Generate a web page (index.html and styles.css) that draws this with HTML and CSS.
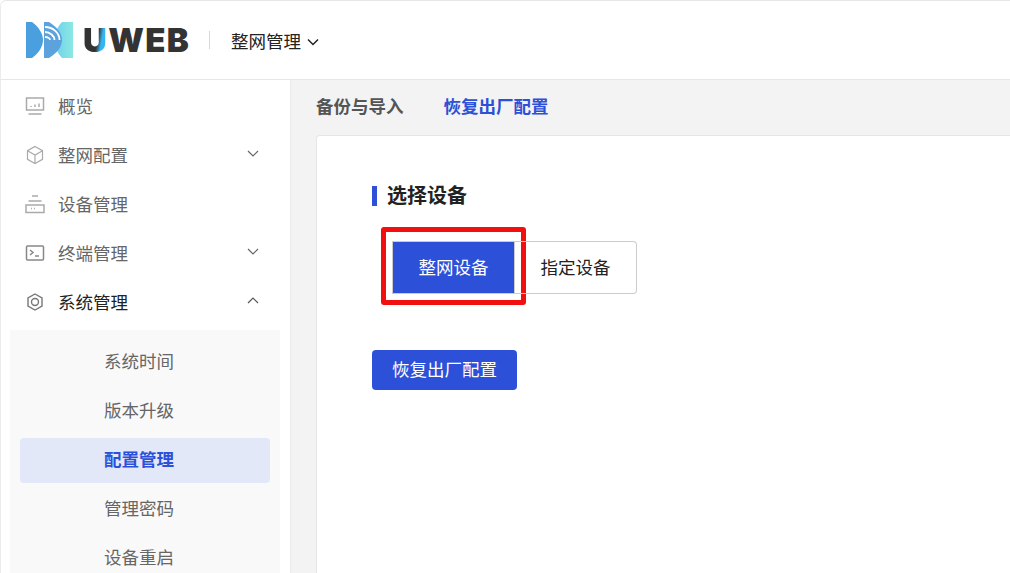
FILE: index.html
```html
<!DOCTYPE html>
<html lang="zh-CN">
<head>
    <meta charset="UTF-8">
    <title>UWEB</title>
    <link rel="stylesheet" href="styles.css">
</head>
<body>
    <header class="topbar">
        <div class="logo">
            <svg class="logo-mark" width="47" height="36" viewBox="0 0 47 36">
                <defs>
                    <linearGradient id="markRight" x1="0" y1="0" x2="1" y2="0">
                        <stop offset="0" stop-color="#6fd0ea"/>
                        <stop offset="1" stop-color="#8ce8e4"/>
                    </linearGradient>
                </defs>
                <path d="M47 0H36C31 5 29 12 29 18C29 24 31 31 36 36H47Z" fill="url(#markRight)"/>
                <path d="M0 0H6C13 5 17 12 17 18C17 24 13 31 6 36H0Z" fill="#4a9fdf"/>
                <path d="M18 0H23C31 5 36 11 36 18C36 25 31 31 23 36H18Z" fill="#5ca3de"/>
                <g fill="none" stroke="#fff" stroke-width="1.800">
                    <path d="M19 5C27 5 33.500 11 33.500 18"/>
                    <path d="M19 10C24 10 28.500 14 28.500 18"/>
                    <path d="M19 15C22 15 24 16.500 24 18"/>
                </g>
            </svg>
            <span class="logo-text"><span class="logo-u">U</span>WEB</span>
        </div>
        <div class="scope">
            <span class="scope-name">整网管理</span>
            <svg class="scope-arrow" width="12" height="8" viewBox="0 0 12 8"><path d="M1 1.500L6 6.500L11 1.500" fill="none" stroke="#222" stroke-width="1.500"/></svg>
        </div>
    </header>

    <div class="main">
        <aside class="sidebar">
            <div class="menu-item">
                <svg class="menu-icon" width="20" height="20" viewBox="0 0 20 20"><g fill="none" stroke="#aaa" stroke-width="1.500"><rect x="1.500" y="2" width="17" height="12"/><path d="M3.500 18H16.500"/><path d="M6 11V10M10 11V8.500M14 11V7.500"/></g></svg>
                <span>概览</span>
            </div>
            <div class="menu-item">
                <svg class="menu-icon" width="20" height="20" viewBox="0 0 20 20"><g fill="none" stroke="#aaa" stroke-width="1.200"><path d="M10 1.500L17.500 5.700V14.300L10 18.500L2.500 14.300V5.700Z"/><path d="M2.500 5.700L10 10L17.500 5.700M10 10V18.500"/></g></svg>
                <span>整网配置</span>
                <svg class="menu-arrow" width="12" height="7" viewBox="0 0 12 7"><path d="M1 1L6 6L11 1" fill="none" stroke="#666" stroke-width="1.200"/></svg>
            </div>
            <div class="menu-item">
                <svg class="menu-icon" width="20" height="20" viewBox="0 0 20 20"><g fill="none" stroke="#aaa" stroke-width="1.500"><path d="M7 2H13M3.500 7H16.500"/><rect x="1" y="11" width="18" height="7.500"/><path d="M6 14.500H7M9 14.500H10"/></g></svg>
                <span>设备管理</span>
            </div>
            <div class="menu-item">
                <svg class="menu-icon" width="20" height="20" viewBox="0 0 20 20"><g fill="none" stroke="#888" stroke-width="1.500"><rect x="1.500" y="3" width="17" height="14" rx="1"/><path d="M5 7L8 9.500L5 12"/><path d="M10 13H14"/></g></svg>
                <span>终端管理</span>
                <svg class="menu-arrow" width="12" height="7" viewBox="0 0 12 7"><path d="M1 1L6 6L11 1" fill="none" stroke="#666" stroke-width="1.200"/></svg>
            </div>
            <div class="menu-item is-open">
                <svg class="menu-icon" width="20" height="20" viewBox="0 0 20 20"><g fill="none" stroke="#777" stroke-width="1.400"><path d="M10 2L17 6V14L10 18L3 14V6Z"/><circle cx="10" cy="10" r="3.500"/></g></svg>
                <span>系统管理</span>
                <svg class="menu-arrow" width="12" height="7" viewBox="0 0 12 7"><path d="M1 6L6 1L11 6" fill="none" stroke="#555" stroke-width="1.200"/></svg>
            </div>
            <div class="submenu">
                <div class="submenu-item">系统时间</div>
                <div class="submenu-item">版本升级</div>
                <div class="submenu-item active">配置管理</div>
                <div class="submenu-item">管理密码</div>
                <div class="submenu-item">设备重启</div>
            </div>
        </aside>

        <section class="content">
            <nav class="tabs">
                <a class="tab">备份与导入</a>
                <a class="tab active">恢复出厂配置</a>
            </nav>
            <div class="card">
                <h2 class="card-title">选择设备</h2>
                <div class="switch">
                    <div class="switch-btn selected">整网设备<span class="mark-box"></span></div>
                    <div class="switch-btn">指定设备</div>
                </div>
                <button class="primary-btn" type="button">恢复出厂配置</button>
            </div>
        </section>
    </div>
</body>
</html>
```

FILE: styles.css
```css
body {
    margin: 0;
    width: 1010px;
    height: 573px;
    overflow: hidden;
    font-family: "Liberation Sans", "Noto Sans CJK SC", sans-serif;
    font-size: 17.500px;
    color: #222;
    background-color: #fff;
    display: flex;
    flex-direction: column;
}
.topbar {
    height: 80px;
    box-sizing: border-box;
    flex-shrink: 0;
    display: flex;
    align-items: center;
    padding-left: 25px;
    border-top: 1px solid #e6e6e6;
    border-left: 1px solid #ececec;
    border-bottom: 1px solid #e6e6e6;
    border-top-left-radius: 6px;
}
.logo {
    display: flex;
    align-items: center;
    gap: 10px;
    padding-right: 19px;
}
.logo-text {
    font-family: Inter, "Liberation Sans", sans-serif;
    font-weight: 900;
    font-size: 33px;
    line-height: 36px;
    letter-spacing: 1.300px;
    color: #333;
}
.logo-u {
    background: linear-gradient(100deg, #333 55%, #35b4f0 70%);
    -webkit-background-clip: text;
    background-clip: text;
    color: transparent;
}
.scope {
    display: flex;
    align-items: center;
    gap: 6px;
    height: 18px;
    padding-left: 21px;
    border-left: 1px solid #d8d8d8;
    line-height: 18px;
}
.scope-name {
    padding-top: 3px;
}
.scope-arrow {
    margin-top: 3px;
}
.main {
    flex: 1;
    display: flex;
    min-height: 0;
}
.sidebar {
    width: 291px;
    flex-shrink: 0;
    box-sizing: border-box;
    padding-top: 1px;
    border-right: 1px solid #ececec;
    border-left: 1px solid #ececec;
    overflow: hidden;
}
.menu-item {
    height: 49px;
    display: flex;
    align-items: center;
    padding-left: 24px;
    padding-right: 31px;
    color: #666;
}
.menu-item.is-open {
    color: #222;
}
.menu-icon {
    margin-right: 13px;
    flex-shrink: 0;
}
.menu-arrow {
    margin-left: auto;
    margin-top: -3px;
}
.submenu {
    margin: 4px 10px 0 9px;
    padding: 10px 10px;
    background-color: #f9f9f9;
}
.submenu-item {
    height: 45px;
    line-height: 45px;
    margin-bottom: 4px;
    padding-left: 84px;
    color: #666;
    border-radius: 4px;
}
.submenu-item.active {
    background-color: #e3e8f8;
    color: #2c50d8;
    font-weight: 700;
}
.content {
    flex: 1;
    min-width: 0;
    background-color: #f3f3f3;
    padding-left: 25px;
    display: flex;
    flex-direction: column;
}
.tabs {
    height: 51px;
    flex-shrink: 0;
    display: flex;
    align-items: center;
    gap: 40px;
    padding-bottom: 4px;
}
.tab {
    font-weight: 700;
    color: #555;
}
.tab.active {
    color: #2c50d8;
}
.card {
    flex: 1;
    background-color: #fff;
    border-top: 1px solid #e6e6e6;
    border-left: 1px solid #e6e6e6;
    border-top-left-radius: 4px;
    padding: 50px 0 0 55px;
}
.card-title {
    margin: 0;
    font-size: 20px;
    line-height: 20px;
    font-weight: 700;
    color: #222;
    padding-left: 10px;
    border-left: 5px solid #2c50d8;
}
.switch {
    display: flex;
    margin: 35px 0 0 20px;
}
.switch-btn {
    position: relative;
    width: 122px;
    height: 53px;
    box-sizing: border-box;
    display: flex;
    align-items: center;
    justify-content: center;
    padding-bottom: 2px;
    border: 1px solid #ccc;
    border-left: none;
    border-radius: 0 4px 4px 0;
    color: #222;
}
.switch-btn.selected {
    width: 123px;
    background-color: #2c50d8;
    color: #fff;
    border-radius: 0;
    border-left: 1px solid #ccc;
}
.mark-box {
    position: absolute;
    left: -12px;
    top: -15px;
    width: 145px;
    height: 78px;
    box-sizing: border-box;
    border: 5px solid #f10f0f;
    border-radius: 3px;
}
.primary-btn {
    display: block;
    margin-top: 56px;
    width: 145px;
    height: 40px;
    padding: 0 0 4px;
    border: none;
    border-radius: 4px;
    background-color: #2c50d8;
    color: #fff;
    font-family: inherit;
    font-size: 17.500px;
}
```
